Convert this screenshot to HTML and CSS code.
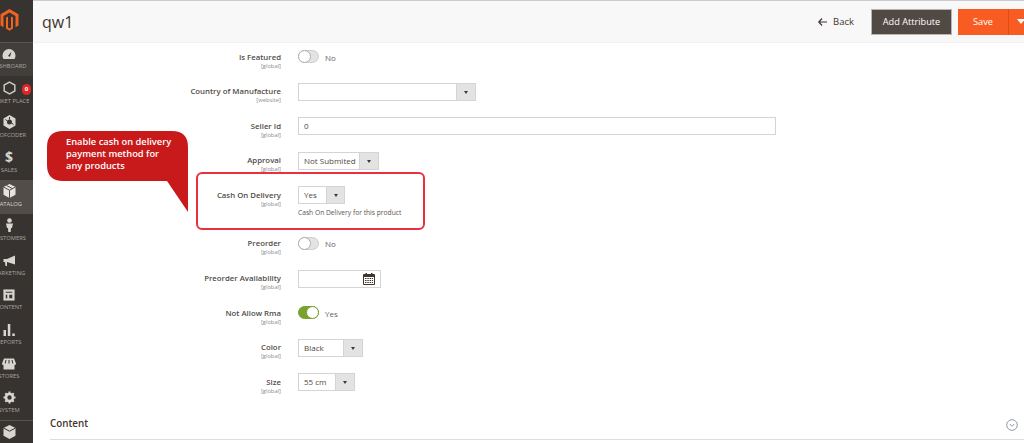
FILE: index.html
```html
<!DOCTYPE html>
<html lang="en">
<head>
  <meta charset="UTF-8" />
  <meta name="viewport" content="width=device-width, initial-scale=1.0"/>
  <title>qw1</title>
  <link rel="stylesheet" href="styles.css">
</head>
<body>
  <nav class="sidebar">
    <div class="logo">
      <svg width="19" height="24" viewBox="0 0 19 24"><path d="M9.5 1 18.500 6.200V17.500L15.500 19.200V8L9.500 4.600 3.500 8V19.200L.5 17.500V6.200Z" fill="#f26322"/><path d="M8 8.500V19.500L9.500 20.400 11 19.500V8.500L13 9.600V20.600L9.500 22.800 6 20.600V9.600Z" fill="#f26322"/></svg>
    </div>
    <a class="nav-item nav-dash">
      <svg width="14" height="12" viewBox="0 0 14 12"><path d="M7 1A6.5 6.5 0 0 0 .5 7.500C.5 9 1 10 1.500 11H12.500C13 10 13.500 9 13.500 7.500A6.500 6.500 0 0 0 7 1Z" fill="#d8d5d0"/><path d="M6 8 9.500 3.500 8 8.800Z" fill="#373330"/></svg>
      <span>DASHBOARD</span>
    </a>
    <a class="nav-item">
      <svg width="13" height="14" viewBox="0 0 13 14"><path d="M6.500 1.200 11.800 4V10L6.500 12.800 1.200 10V4Z" fill="none" stroke="#c9c6c1" stroke-width="1.500"/></svg>
      <span>MARKET PLACE</span>
      <b class="badge">0</b>
    </a>
    <a class="nav-item">
      <svg width="13" height="14" viewBox="0 0 13 14"><path d="M6.500 0 12.500 3.500V10.500L6.500 14 .5 10.500V3.500Z" fill="#d8d5d0"/><circle cx="6.500" cy="7" r="2.500" fill="#373330"/><path d="M6.500 2 6.500 4.500M2.500 4.500 4.500 6M10.500 9.500 8.500 8" stroke="#373330"/></svg>
      <span>LOOFCODER</span>
    </a>
    <a class="nav-item">
      <i class="dollar">$</i>
      <span>SALES</span>
    </a>
    <a class="nav-item nav-active">
      <svg width="13" height="14" viewBox="0 0 13 14"><path d="M6.500 0 12.500 3V10.800L6.500 14 .5 10.800V3Z" fill="#e6e3df"/><path d="M.5 3 6.500 6.200 12.500 3M6.500 6.200V14M3.500 1.500 9.500 4.600" fill="none" stroke="#524d49"/></svg>
      <span>CATALOG</span>
    </a>
    <a class="nav-item">
      <svg width="9" height="14" viewBox="0 0 9 14"><circle cx="4.500" cy="2.500" r="2.300" fill="#d8d5d0"/><path d="M1 5.500H8L7 10H6L5.700 14H3.300L3 10H2Z" fill="#d8d5d0"/></svg>
      <span>CUSTOMERS</span>
    </a>
    <a class="nav-item">
      <svg width="13" height="12" viewBox="0 0 13 12"><path d="M.5 4H4L12 .5V9.500L4 7V11H2.500L2 7H.5Z" fill="#d8d5d0"/></svg>
      <span>MARKETING</span>
    </a>
    <a class="nav-item">
      <svg width="12" height="12" viewBox="0 0 12 12"><path d="M.7.7H11.300V11.300H.7ZM2.500 2.500V4H9.500V2.500ZM2.500 5.500V9.500H4.500V5.500ZM6 5.500V9.500H9.500V5.500Z" fill="#d8d5d0" fill-rule="evenodd" stroke="#d8d5d0" stroke-width=".5"/></svg>
      <span>CONTENT</span>
    </a>
    <a class="nav-item">
      <svg width="12" height="12" viewBox="0 0 12 12"><path d="M.5 6H3V12H.5ZM4.800 0H7.300V12H4.800ZM9.300 9.500H11.800V12H9.300Z" fill="#d8d5d0"/></svg>
      <span>REPORTS</span>
    </a>
    <a class="nav-item">
      <svg width="14" height="12" viewBox="0 0 14 12"><path d="M2 .5H12L14 5.500C14 6.500 13 7 12.500 7V11.500H1.500V7C1 7 0 6.500 0 5.500Z" fill="#d8d5d0"/><path d="M4 2 3.200 5.500M7 2V5.500M10 2 10.800 5.500" stroke="#373330"/></svg>
      <span>STORES</span>
    </a>
    <a class="nav-item">
      <svg width="13" height="13" viewBox="0 0 13 13"><circle cx="6.500" cy="6.500" r="3.500" fill="none" stroke="#d8d5d0" stroke-width="2.600"/><path d="M6.500 .5V12.500M.5 6.500H12.500M2.300 2.300 10.700 10.700M10.700 2.300 2.300 10.700" stroke="#d8d5d0" stroke-width="2" stroke-dasharray="2.200 7.600"/></svg>
      <span>SYSTEM</span>
    </a>
    <a class="nav-item nav-last">
      <svg width="13" height="14" viewBox="0 0 13 14"><path d="M6.500 0 12.500 3V10.800L6.500 14 .5 10.800V3Z" fill="#d8d5d0"/><path d="M.5 3 6.500 6.200 12.500 3" fill="none" stroke="#373330"/></svg>
      <span>PARTNERS</span>
    </a>
  </nav>

  <main class="main">
    <header class="page-head">
      <h1>qw1</h1>
      <div class="head-actions">
        <a class="back-link">
          <svg width="9" height="8" viewBox="0 0 9 8"><path d="M4 .5.8 4 4 7.500M1 4H9" fill="none" stroke="#41362f" stroke-width="1.200"/></svg>
          Back
        </a>
        <button class="btn-dark">Add Attribute</button>
        <div class="save-group">
          <button class="btn-save">Save</button>
          <button class="btn-save-arrow"><i></i></button>
        </div>
      </div>
    </header>

    <form class="form">
      <div class="row">
        <label>Is Featured<small>[global]</small></label>
        <div class="toggle-line"><span class="toggle"></span>No</div>
      </div>
      <div class="row">
        <label>Country of Manufacture<small>[website]</small></label>
        <div class="select select-country"><span></span><em></em></div>
      </div>
      <div class="row">
        <label>Seller Id<small>[global]</small></label>
        <div class="input input-seller">0</div>
      </div>
      <div class="row">
        <label>Approval<small>[global]</small></label>
        <div class="select select-approval"><span>Not Submited</span><em></em></div>
      </div>
      <div class="row">
        <label>Cash On Delivery<small>[global]</small></label>
        <div>
          <div class="select select-cod"><span>Yes</span><em></em></div>
          <p class="note">Cash On Delivery for this product</p>
        </div>
      </div>
      <div class="row">
        <label>Preorder<small>[global]</small></label>
        <div class="toggle-line"><span class="toggle"></span>No</div>
      </div>
      <div class="row">
        <label>Preorder Availability<small>[global]</small></label>
        <div class="input input-date">
          <svg width="12" height="12" viewBox="0 0 12 12"><path d="M.5 1.500H11.500V11.500H.5Z" fill="none" stroke="#41362f"/><path d="M.5 1.500H11.500V4H.5ZM2.500 0H4V2H2.500ZM8 0H9.500V2H8Z" fill="#41362f"/><path d="M2 5.500H10M2 7.500H10M2 9.500H10" stroke="#41362f" stroke-dasharray="1.500 .8"/></svg>
        </div>
      </div>
      <div class="row">
        <label>Not Allow Rma<small>[global]</small></label>
        <div class="toggle-line"><span class="toggle toggle-on"></span>Yes</div>
      </div>
      <div class="row">
        <label>Color<small>[global]</small></label>
        <div class="select select-color"><span>Black</span><em></em></div>
      </div>
      <div class="row">
        <label>Size<small>[global]</small></label>
        <div class="select select-size"><span>55 cm</span><em></em></div>
      </div>
    </form>

    <section class="content-head">
      <h2>Content</h2>
      <svg width="12" height="12" viewBox="0 0 12 12"><circle cx="6" cy="6" r="5.300" fill="none" stroke="#8e9aa6"/><path d="M3.800 5 6 7.300 8.200 5" fill="none" stroke="#8e9aa6"/></svg>
    </section>
  </main>

  <!-- annotations drawn over the page -->
  <div class="highlight"></div>
  <div class="callout">
    <svg width="142" height="81" viewBox="0 0 142 81"><path d="M16 0H125Q141 0 141 16V81L120 50H16Q0 50 0 34V16Q0 0 16 0Z" fill="#c81a1a"/></svg>
    <p>Enable cash on delivery payment method for any products</p>
  </div>
</body>
</html>
```

FILE: styles.css
```css
html, body {
  margin: 0;
  height: 443px;
  overflow: hidden;
}
body {
  display: flex;
  position: relative;
  background: #fff;
  color: #41362f;
  font-family: "Open Sans", Arial, sans-serif;
  font-size: 9px;
}
.sidebar {
  width: 33px;
  flex: none;
  height: 443px;
  overflow: hidden;
  background: #373330;
}
.logo {
  height: 42px;
  padding: 8px 0 0;
  box-sizing: border-box;
}
.logo svg {
  display: block;
}
.nav-item {
  display: flex;
  flex-direction: column;
  align-items: center;
  justify-content: flex-end;
  position: relative;
  width: 66px;
  height: 34.400px;
  margin-left: -24px;
  padding-bottom: 6px;
  box-sizing: border-box;
  white-space: nowrap;
}
.nav-item svg, .dollar {
  margin-bottom: 2px;
}
.nav-item span {
  color: #a9a5a0;
  font-size: 5.800px;
  line-height: 8px;
}
.nav-dash {
  background: #423e3b;
  border-top: 1px solid #5a5551;
}
.nav-active {
  background: #524d49;
}
.nav-active span {
  color: #d8d5d0;
}
.nav-last {
  border-top: 1px solid #5a5551;
}
.dollar {
  color: #d8d5d0;
  font-style: normal;
  font-weight: 700;
  font-size: 14px;
  line-height: 14px;
}
.badge {
  position: absolute;
  top: 8px;
  left: 46px;
  width: 9px;
  height: 11px;
  border-radius: 5px;
  background: #e22626;
  color: #fff;
  font-size: 6px;
  line-height: 11px;
  text-align: center;
}

.main {
  flex: 1;
  min-width: 0;
}
.page-head {
  display: flex;
  justify-content: space-between;
  align-items: center;
  height: 43px;
  padding-left: 9px;
  box-sizing: border-box;
  border-top: 1px solid #ccc;
  border-bottom: 1px solid #f1f1f1;
  background: #f8f8f8;
}
h1 {
  margin: 0;
  font-size: 16px;
  font-weight: 400;
}
.head-actions {
  display: flex;
  align-items: center;
}
.back-link {
  display: flex;
  align-items: center;
  gap: 6px;
  margin-right: 17px;
  font-size: 9.500px;
}
button {
  font-family: inherit;
  border: 0;
  padding: 0;
}
.btn-dark {
  width: 81px;
  height: 26px;
  background: #514943;
  border: 1px solid #b9b5b1;
  color: #fff;
  font-size: 9.200px;
  font-weight: 400;
}
.save-group {
  display: flex;
  margin-left: 6px;
}
.btn-save, .btn-save-arrow {
  height: 26px;
  background: #f85c22;
  color: #fff;
  font-size: 9.200px;
  font-weight: 400;
}
.btn-save {
  width: 51px;
  border-right: 1px solid #e04e14;
}
.btn-save-arrow {
  width: 15px;
  text-align: left;
  padding-left: 8px;
}
.btn-save-arrow i {
  display: block;
  width: 0;
  border: 4px solid transparent;
  border-top: 5px solid #fff;
  border-bottom: 0;
}

.form {
  display: flex;
  flex-direction: column;
  gap: 16.600px;
  padding-top: 5px;
}
.row {
  display: flex;
  gap: 17px;
}
.row label {
  width: 248px;
  height: 18px;
  flex: none;
  box-sizing: border-box;
  padding-top: 3.500px;
  text-align: right;
  font-weight: 600;
  font-size: 7.800px;
  line-height: 11px;
  color: #524c48;
}
.row small {
  display: block;
  font-size: 5.800px;
  font-weight: 400;
  line-height: 7px;
  color: #8c8c8c;
}
.toggle-line {
  display: flex;
  align-items: center;
  gap: 6px;
  height: 18px;
  font-size: 8px;
  color: #6a6460;
}
.toggle {
  position: relative;
  width: 19px;
  height: 11px;
  margin-top: -1px;
  border-radius: 7px;
  background: #e3e3e3;
  border: 1px solid #cfcfcf;
}
.toggle::after {
  content: "";
  position: absolute;
  left: -1px;
  top: -1px;
  width: 11px;
  height: 11px;
  border-radius: 50%;
  background: #fff;
  border: 1px solid #adadad;
}
.toggle-on {
  background: #79a22e;
  border-color: #79a22e;
}
.toggle-on::after {
  left: auto;
  right: -1px;
  border-color: #79a22e;
}
.select, .input {
  display: flex;
  height: 18px;
  box-sizing: border-box;
  border: 1px solid #d4d4d4;
  background: #fff;
  font-size: 8px;
  line-height: 16px;
  color: #514943;
  white-space: nowrap;
}
.select span {
  flex: 1;
  min-width: 0;
  padding-left: 5px;
}
.select em {
  position: relative;
  flex: none;
  width: 18px;
  background: #e3e3e3;
  border-left: 1px solid #d4d4d4;
}
.select em::after {
  content: "";
  position: absolute;
  left: 7px;
  top: 7px;
  border: 2.500px solid transparent;
  border-top: 3px solid #41362f;
  border-bottom: 0;
}
.select-country { width: 178px; }
.select-approval { width: 81px; }
.select-cod { width: 47px; }
.select-cod em { width: 17px; }
.select-color { width: 65px; }
.select-size { width: 57px; }
.input {
  padding-left: 5px;
}
.input-seller { width: 478px; }
.input-date {
  width: 83px;
  justify-content: flex-end;
  align-items: center;
  padding-right: 5px;
}
.note {
  margin: 4px 0 0;
  font-size: 6.700px;
  line-height: 10px;
  color: #5c5550;
}

.content-head {
  display: flex;
  justify-content: space-between;
  align-items: flex-start;
  height: 24px;
  margin: 25px 0 0 17px;
  padding: 1px 6px 0 0;
  box-sizing: border-box;
  border-bottom: 1px solid #ddd;
}
.content-head svg {
  margin-top: 2px;
}
h2 {
  margin: 0;
  font-size: 9.800px;
  font-weight: 600;
  color: #41362f;
}

.highlight {
  position: absolute;
  left: 196px;
  top: 172px;
  width: 225px;
  height: 54px;
  border: 2px solid #e8303f;
  border-radius: 6px;
}
.callout {
  position: absolute;
  left: 47px;
  top: 131px;
  width: 142px;
  height: 81px;
}
.callout svg {
  display: block;
}
.callout p {
  position: absolute;
  left: 19px;
  top: 5px;
  width: 106px;
  margin: 0;
  color: #fff;
  font-size: 9.300px;
  font-weight: 600;
  line-height: 12.200px;
}
```
